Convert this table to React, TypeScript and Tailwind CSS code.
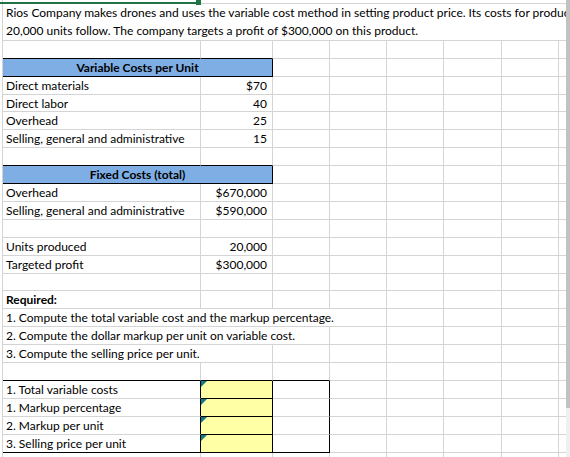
import type { ReactNode } from 'react';

type Edge = 'grid' | 'black' | 'none';

const RIGHT: Record<Edge, string> = {
  grid: 'border-r border-r-[#d4d4d4]',
  black: 'border-r border-r-black',
  none: '',
};
const BOTTOM: Record<Edge, string> = {
  grid: 'border-b border-b-[#d4d4d4]',
  black: 'border-b border-b-black',
  none: '',
};

// column widths, right gridline included (A..G)
const COLS = ['w-[198px]', 'w-[72px]', 'w-[57px]', 'w-[57px]', 'w-[57px]', 'w-[58px]', 'w-[57px]'];

interface CellProps {
  w: string;
  r?: Edge;
  b?: Edge;
  className?: string;
  children?: ReactNode;
}

function Cell({ w, r = 'grid', b = 'grid', className = '', children }: CellProps) {
  return (
    <div
      className={`${w} ${RIGHT[r]} ${BOTTOM[b]} relative h-full shrink-0 overflow-hidden whitespace-nowrap leading-[17px] ${className}`}
    >
      {children}
    </div>
  );
}

function Tail({ from, b = 'grid' }: { from: number; b?: Edge }) {
  return (
    <>
      {COLS.slice(from).map((w, i) => (
        <Cell key={i} w={w} b={b} />
      ))}
      <Cell w="flex-1" r="none" />
    </>
  );
}

function Row({ h = 'h-[18px]', children }: { h?: string; children: ReactNode }) {
  return <div className={`flex ${h}`}>{children}</div>;
}

function Item({ label, value, h }: { label: string; value: string; h?: string }) {
  return (
    <Row h={h}>
      <Cell w={COLS[0]} className="pl-[3px]">{label}</Cell>
      <Cell w={COLS[1]} className="pr-[5px] text-right">{value}</Cell>
      <Tail from={2} />
    </Row>
  );
}

function Header({ title }: { title: string }) {
  return (
    <Row>
      <Cell w="w-[270px]" r="black" b="black" className="bg-[#7eaee3] text-center font-bold">
        {title}
      </Cell>
      <Tail from={2} />
    </Row>
  );
}

function Empty({ h, black = 0 }: { h?: string; black?: number }) {
  // black = how many leading cells get a black bottom edge
  return (
    <Row h={h}>
      {COLS.map((w, i) => (
        <Cell key={i} w={w} b={i < black ? 'black' : 'grid'} />
      ))}
      <Cell w="flex-1" r="none" />
    </Row>
  );
}

function Answer({ label, last = false }: { label: string; last?: boolean }) {
  return (
    <Row>
      <Cell w={COLS[0]} r="black" b={last ? 'black' : 'grid'} className="pl-[3px]">
        {label}
      </Cell>
      <Cell w={COLS[1]} r="black" b="black" className="bg-[#ffffa6]">
        <svg className="absolute left-0 top-0" width="6" height="6" viewBox="0 0 6 6">
          <polygon points="0,0 6,0 0,6" fill="#127a86" />
        </svg>
      </Cell>
      <Cell w={COLS[2]} r="black" b={last ? 'black' : 'grid'} />
      <Tail from={3} />
    </Row>
  );
}

export default function App() {
  return (
    <div className="relative flex h-[457px] w-[570px] overflow-hidden bg-white font-['Lato','Liberation_Sans',sans-serif] text-[12px] text-black">
      <div className="ml-[2px] flex-1 overflow-hidden border-l border-l-[#d4d4d4]">
        {/* tail of the selected cell above */}
        <Row h="h-[4px]">
          <Cell w="flex-1" r="none" />
        </Row>

        <div className="flex h-[37px] border-b border-b-[#d4d4d4]">
          <div className="overflow-hidden whitespace-nowrap pl-[3px] leading-[18px]">
            <div>
              Rios Company makes drones and uses the variable cost method in setting product price. Its costs for
              producing
            </div>
            <div>20,000 units follow. The company targets a profit of $300,000 on this product.</div>
          </div>
        </div>

        <Empty black={2} />
        <Header title="Variable Costs per Unit" />
        <Item label="Direct materials" value="$70" />
        <Item label="Direct labor" value="40" h="h-[17px]" />
        <Item label="Overhead" value="25" />
        <Item label="Selling, general and administrative" value="15" />
        <Empty black={2} />
        <Header title="Fixed Costs (total)" />
        <Item label="Overhead" value="$670,000" />
        <Item label="Selling, general and administrative" value="$590,000" />
        <Empty />
        <Item label="Units produced" value="20,000" />
        <Item label="Targeted profit" value="$300,000" />
        <Empty h="h-[17px]" />

        <Row>
          <Cell w={COLS[0]} className="pl-[3px] font-bold">Required:</Cell>
          <Tail from={1} />
        </Row>
        <Row>
          <Cell w="w-[384px]" className="pl-[3px]">1. Compute the total variable cost and the markup percentage.</Cell>
          <Tail from={4} />
        </Row>
        <Row>
          <Cell w="w-[327px]" className="pl-[3px]">2. Compute the dollar markup per unit on variable cost.</Cell>
          <Tail from={3} />
        </Row>
        <Row>
          <Cell w="w-[270px]" className="pl-[3px]">3. Compute the selling price per unit.</Cell>
          <Tail from={2} />
        </Row>
        <Empty black={3} />

        <Answer label="1. Total variable costs" />
        <Answer label="1. Markup percentage" />
        <Answer label="2. Markup per unit" />
        <Answer label="3. Selling price per unit" last />
        <Empty />
      </div>

      {/* vertical scrollbar */}
      <div className="flex w-[4px] flex-col">
        <div className="h-[408px] bg-[#c2c2c2]" />
        <div className="flex-1 bg-[#f0f0f0]" />
      </div>

      {/* selection border + fill handle */}
      <div className="absolute left-0 top-[2px] h-[2px] w-[197px] bg-[#217346]" />
      <div className="absolute left-[196px] top-0 h-[5px] w-[5px] bg-[#217346]" />
    </div>
  );
}
